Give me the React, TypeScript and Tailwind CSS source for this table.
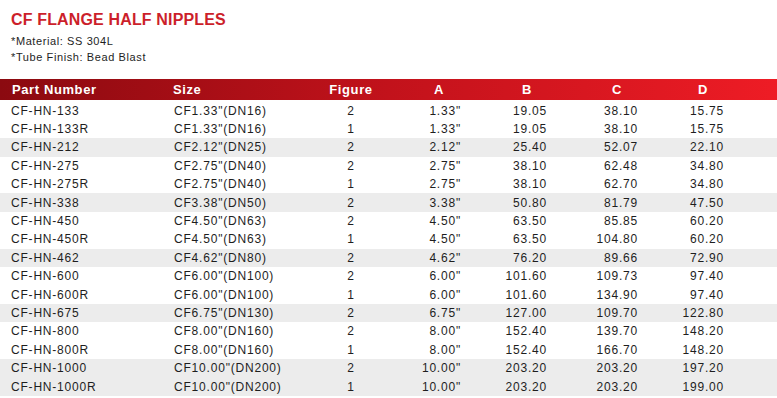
import React from 'react';

const rows: [string, string, string, string, string, string, string][] = [
  ['CF-HN-133', 'CF1.33"(DN16)', '2', '1.33"', '19.05', '38.10', '15.75'],
  ['CF-HN-133R', 'CF1.33"(DN16)', '1', '1.33"', '19.05', '38.10', '15.75'],
  ['CF-HN-212', 'CF2.12"(DN25)', '2', '2.12"', '25.40', '52.07', '22.10'],
  ['CF-HN-275', 'CF2.75"(DN40)', '2', '2.75"', '38.10', '62.48', '34.80'],
  ['CF-HN-275R', 'CF2.75"(DN40)', '1', '2.75"', '38.10', '62.70', '34.80'],
  ['CF-HN-338', 'CF3.38"(DN50)', '2', '3.38"', '50.80', '81.79', '47.50'],
  ['CF-HN-450', 'CF4.50"(DN63)', '2', '4.50"', '63.50', '85.85', '60.20'],
  ['CF-HN-450R', 'CF4.50"(DN63)', '1', '4.50"', '63.50', '104.80', '60.20'],
  ['CF-HN-462', 'CF4.62"(DN80)', '2', '4.62"', '76.20', '89.66', '72.90'],
  ['CF-HN-600', 'CF6.00"(DN100)', '2', '6.00"', '101.60', '109.73', '97.40'],
  ['CF-HN-600R', 'CF6.00"(DN100)', '1', '6.00"', '101.60', '134.90', '97.40'],
  ['CF-HN-675', 'CF6.75"(DN130)', '2', '6.75"', '127.00', '109.70', '122.80'],
  ['CF-HN-800', 'CF8.00"(DN160)', '2', '8.00"', '152.40', '139.70', '148.20'],
  ['CF-HN-800R', 'CF8.00"(DN160)', '1', '8.00"', '152.40', '166.70', '148.20'],
  ['CF-HN-1000', 'CF10.00"(DN200)', '2', '10.00"', '203.20', '203.20', '197.20'],
  ['CF-HN-1000R', 'CF10.00"(DN200)', '1', '10.00"', '203.20', '203.20', '199.00'],
];

// every third row is shaded, plus the last one
const shaded = [2, 5, 8, 11, 14, 15];

const cols = 'grid grid-cols-[174px_146px_62px_79px_86px_91px_86px_53px]';

export default function App() {
  return (
    <div className="w-[777px] h-[398px] overflow-hidden bg-white font-['Liberation_Sans',Arial,sans-serif]">
      <div className="pl-[11px] pt-[10px]">
        <h1 className="text-[16px] leading-5 font-bold tracking-[0.15px] text-[#cc1f2b]">CF FLANGE HALF NIPPLES</h1>
        <div className="mt-[3px] text-[11px] leading-4 tracking-[0.6px] text-[#1e1e1e]">
          <p>*Material: SS 304L</p>
          <p>*Tube Finish: Bead Blast</p>
        </div>
      </div>

      <div className={`${cols} mt-[14px] h-[21px] items-center bg-gradient-to-r from-[#8b0a10] via-[#c2121b] to-[#ee1c25] text-[13px] font-bold tracking-[0.6px] text-white`}>
        <div className="pl-[12px]">Part Number</div>
        <div className="-ml-px">Size</div>
        <div className="text-center">Figure</div>
        <div className="text-right pr-[17px]">A</div>
        <div className="text-right pr-[15px]">B</div>
        <div className="text-right pr-[16px]">C</div>
        <div className="text-right pr-[16px]">D</div>
        <div />
      </div>

      <div className="mt-[1.5px] text-[12px] tracking-[0.8px] text-[#1e1e1e]">
        {rows.map((r, i) => (
          <div
            key={r[0]}
            className={`${cols} h-[18.4px] items-center whitespace-nowrap ${shaded.includes(i) ? 'bg-[#ececec]' : ''}`}
          >
            <div className="pl-[11px]">{r[0]}</div>
            <div>{r[1]}</div>
            <div className="text-center">{r[2]}</div>
            <div className="flex justify-end">{r[3]}</div>
            <div className="flex justify-end">{r[4]}</div>
            <div className="flex justify-end">{r[5]}</div>
            <div className="flex justify-end">{r[6]}</div>
            <div />
          </div>
        ))}
      </div>
    </div>
  );
}
